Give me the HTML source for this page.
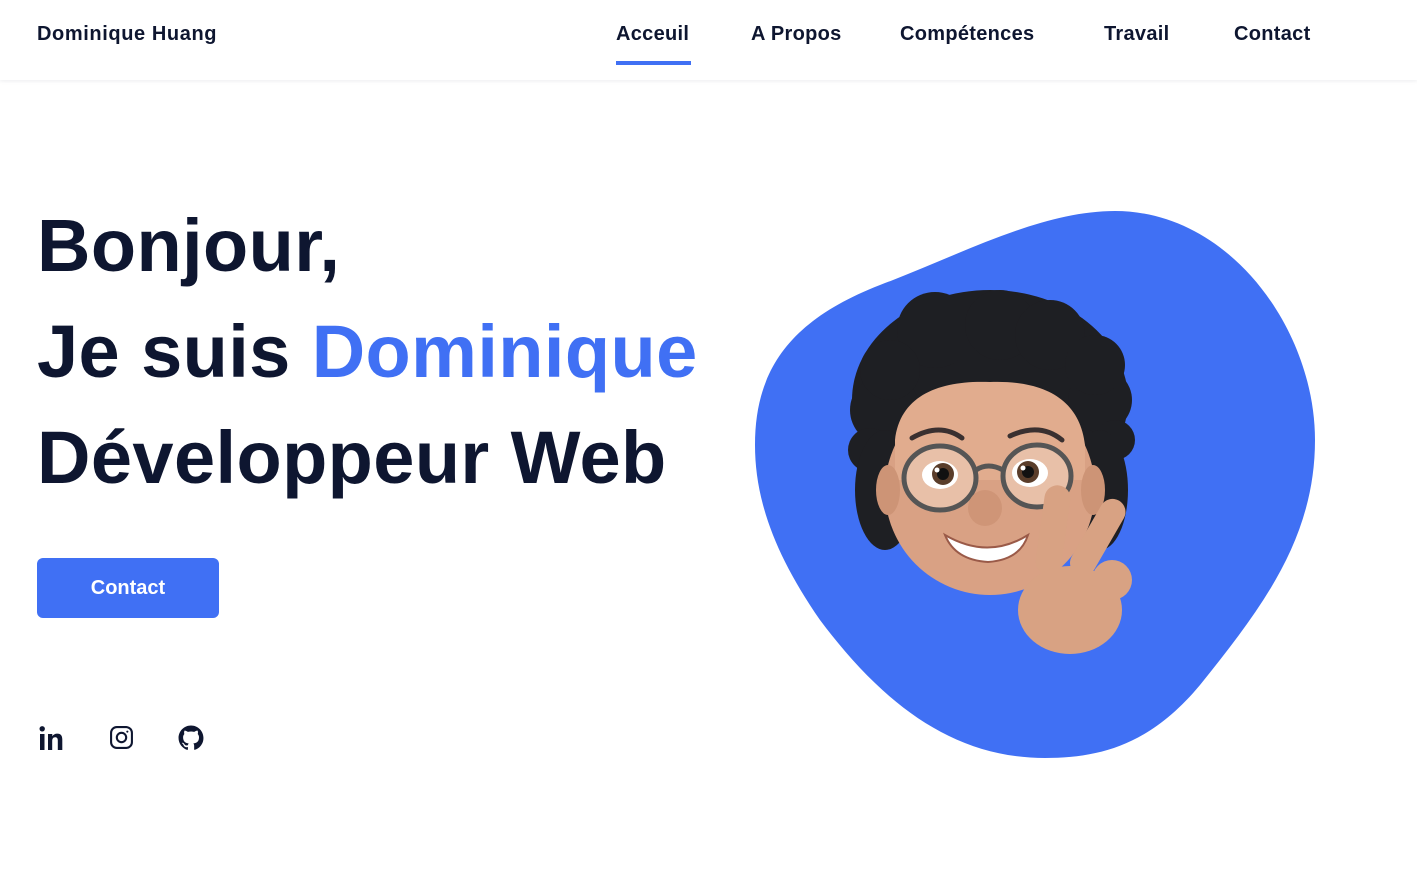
<!DOCTYPE html>
<html><head><meta charset="utf-8"><style>
*{margin:0;padding:0;box-sizing:border-box}
body{width:1417px;height:870px;background:#fff;font-family:"Liberation Sans",sans-serif;color:#0e1630;position:relative;overflow:hidden}
header{position:absolute;left:0;top:0;width:1417px;height:80px;background:#fff;box-shadow:0 1px 4px rgba(14,22,48,.08)}
.logo{position:absolute;left:37px;top:23px;font-size:20px;font-weight:bold;letter-spacing:.6px}
.nav a{position:absolute;top:23px;font-size:20px;font-weight:bold;color:#0e1630;text-decoration:none;white-space:nowrap;letter-spacing:.3px}
.ul{position:absolute;left:616px;top:61px;width:75px;height:4px;background:#4070f4}
h1{position:absolute;left:37px;font-size:74px;font-weight:bold;white-space:nowrap;letter-spacing:0.4px;line-height:1}
.blue{color:#4070f4}
.btn{position:absolute;left:37px;top:558px;width:182px;height:60px;background:#4070f4;border-radius:6px;color:#fff;font-size:20px;font-weight:bold;text-align:center;line-height:60px}
.ic{position:absolute;top:725px}
</style></head><body>
<header>
<div class="logo">Dominique Huang</div>
<div class="nav">
<a style="left:616px">Acceuil</a>
<a style="left:751px">A Propos</a>
<a style="left:900px">Compétences</a>
<a style="left:1104px">Travail</a>
<a style="left:1234px">Contact</a>
</div>
<div class="ul"></div>
</header>
<h1 style="top:209px">Bonjour,</h1>
<h1 style="top:315px">Je suis <span class="blue">Dominique</span></h1>
<h1 style="top:421px">Développeur Web</h1>
<div class="btn">Contact</div>
<svg class="ic" style="left:38px" width="26" height="26" viewBox="0 0 26 26"><rect x="2" y="9" width="4.5" height="16" fill="#0e1630"/><circle cx="4.2" cy="3.8" r="2.7" fill="#0e1630"/><path d="M10 9h4.3v2.3c1-1.7 2.8-2.7 5-2.7 3.6 0 5 2.2 5 6V25h-4.5v-9.5c0-2-.7-3.300-2.6-3.3-2 0-3 1.4-3 3.5V25H10z" fill="#0e1630"/></svg>
<svg class="ic" style="left:109px" width="25" height="25" viewBox="0 0 24 24" fill="none" stroke="#0e1630" stroke-width="2"><rect x="2" y="2" width="20" height="20" rx="5.5"/><circle cx="12" cy="12" r="4.5"/><circle cx="17.6" cy="6.4" r="1" fill="#0e1630" stroke="none"/></svg>
<svg class="ic" style="left:178px" width="26" height="26" viewBox="0 0 24 24"><path fill="#0e1630" d="M12 .5C5.650.5.5 5.650.5 12c0 5.080 3.290 9.390 7.860 10.910.58.1.79-.25.79-.56v-2c-3.200.7-3.870-1.540-3.870-1.540-.52-1.330-1.280-1.690-1.280-1.690-1.040-.71.08-.7.08-.7 1.150.08 1.760 1.190 1.760 1.190 1.030 1.760 2.700 1.250 3.360.96.1-.75.4-1.250.73-1.540-2.550-.29-5.240-1.280-5.240-5.690 0-1.260.45-2.280 1.190-3.090-.12-.29-.52-1.460.11-3.050 0 0 .97-.31 3.170 1.180a11 11 0 0 1 5.770 0c2.200-1.490 3.170-1.180 3.170-1.180.63 1.590.23 2.760.11 3.050.74.81 1.190 1.830 1.190 3.090 0 4.420-2.690 5.390-5.260 5.680.41.36.78 1.060.78 2.140v3.170c0 .31.21.67.8.56A11.500 11.500 0 0 0 23.500 12C23.500 5.650 18.350.5 12 .5z"/></svg>
<svg style="position:absolute;left:0;top:0" width="1417" height="870">
<path d="M1115 211C1230 211 1315 330 1315 440C1315 540 1260 610 1200 685C1150 745 1100 758 1045 758C950 758 880 700 820 620C775 555 755 500 755 445C755 370 790 320 880 285C960 255 1040 211 1115 211Z" fill="#4070f4"/>
<g fill="#1e1f23">
<ellipse cx="990" cy="400" rx="138" ry="110"/>
<circle cx="885" cy="410" r="35"/><circle cx="870" cy="450" r="22"/><circle cx="1100" cy="400" r="32"/><circle cx="1115" cy="440" r="20"/>
<circle cx="935" cy="330" r="38"/><circle cx="1000" cy="325" r="35"/><circle cx="1050" cy="335" r="35"/><circle cx="890" cy="370" r="30"/><circle cx="1095" cy="365" r="30"/>
<ellipse cx="885" cy="490" rx="30" ry="60"/><ellipse cx="1100" cy="490" rx="28" ry="60"/>
</g>
<ellipse cx="990" cy="490" rx="105" ry="105" fill="#d9a184"/>
<path d="M895 440C900 395 940 380 990 382C1045 380 1080 400 1085 445L1085 480L895 480Z" fill="#e1ac8e"/>
<ellipse cx="888" cy="490" rx="12" ry="25" fill="#cd9476"/><ellipse cx="1093" cy="490" rx="12" ry="25" fill="#cd9476"/>
<path d="M912 438Q940 422 962 438" stroke="#3a3030" stroke-width="5" fill="none" stroke-linecap="round"/>
<path d="M1010 436Q1040 422 1062 440" stroke="#3a3030" stroke-width="5" fill="none" stroke-linecap="round"/>
<ellipse cx="940" cy="478" rx="36" ry="32" fill="#e8c0a8" stroke="#555" stroke-width="5"/>
<ellipse cx="1037" cy="476" rx="34" ry="31" fill="#e8c0a8" stroke="#555" stroke-width="5"/>
<path d="M976 470Q988 462 1003 470" stroke="#555" stroke-width="5" fill="none"/>
<ellipse cx="940" cy="475" rx="18" ry="14" fill="#fff"/><circle cx="943" cy="474" r="11" fill="#5a3d2a"/><circle cx="943" cy="474" r="6" fill="#111"/><circle cx="937" cy="470" r="2.5" fill="#fff"/>
<ellipse cx="1030" cy="473" rx="18" ry="14" fill="#fff"/><circle cx="1028" cy="472" r="11" fill="#5a3d2a"/><circle cx="1028" cy="472" r="6" fill="#111"/><circle cx="1023" cy="468" r="2.5" fill="#fff"/>
<ellipse cx="985" cy="508" rx="17" ry="18" fill="#cf9577"/>
<path d="M945 535Q988 560 1028 535Q1020 560 988 562Q955 560 945 535Z" fill="#fff" stroke="#9a5a48" stroke-width="2"/>
<g fill="#d8a283">
<rect x="1040" y="485" width="26" height="90" rx="13" transform="rotate(8 1053 530)"/>
<rect x="1085" y="495" width="26" height="85" rx="13" transform="rotate(30 1098 537)"/>
<ellipse cx="1070" cy="610" rx="52" ry="44"/>
<circle cx="1112" cy="580" r="20"/>
</g>
</svg>
</body></html>
